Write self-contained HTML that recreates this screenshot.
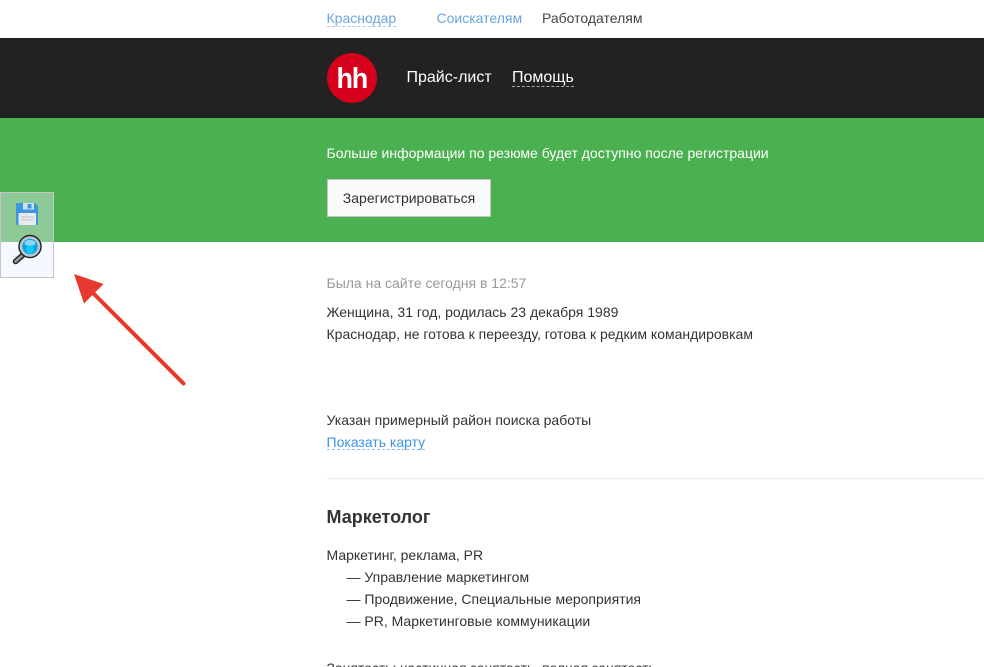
<!DOCTYPE html>
<html lang="ru">
<head>
<meta charset="utf-8">
<title>Резюме</title>
<style>
html,body{margin:0;padding:0;background:#fff;width:984px;height:667px;overflow:hidden}
#p{position:relative;width:984px;height:667px;overflow:hidden;font-family:"Liberation Sans",Arial,sans-serif;font-size:14px;color:#333}
.t{position:absolute;white-space:nowrap;line-height:20px}
.band{position:absolute;left:0;width:984px}
svg{position:absolute;left:0;top:0}
</style>
</head>
<body>
<div id="p">
<div class="band" style="top:38px;height:80px;background:#222"></div>
<div class="band" style="top:118px;height:124px;background:#4bb050"></div>

<div class="t" style="left:326.5px;top:8px;color:#6aa5dc;height:18px;border-bottom:1px dashed #a8cbec">Краснодар</div>
<div class="t" style="left:436.5px;top:8px;color:#6aa5dc">Соискателям</div>
<div class="t" style="left:542px;top:8px;color:#444">Работодателям</div>

<div style="position:absolute;left:327px;top:53px;width:50px;height:50px;border-radius:50%;background:#d6001c"></div>
<div class="t" style="left:336.500px;top:61.700px;color:#fff;font-size:27px;line-height:34px;font-weight:bold;letter-spacing:-1.200px;transform:scaleY(1.060);transform-origin:50% 26.300px">hh</div>

<div class="t" style="left:406.5px;top:68px;color:#fff;font-size:16px">Прайс-лист</div>
<div class="t" style="left:512px;top:68px;color:#fff;font-size:16px;height:18px;border-bottom:1px dashed #aaa">Помощь</div>

<div class="t" style="left:326.5px;top:143px;color:#fff">Больше информации по резюме будет доступно после регистрации</div>
<div style="position:absolute;left:327px;top:179px;width:162px;height:36px;background:#fafafa;border:1px solid #c4c4c4;text-align:center;line-height:37px;color:#333">Зарегистрироваться</div>

<div class="t" style="left:326.5px;top:273px;color:#999">Была на сайте сегодня в 12:57</div>
<div class="t" style="left:326.5px;top:302px">Женщина, 31 год, родилась 23 декабря 1989</div>
<div class="t" style="left:326.5px;top:324px">Краснодар, не готова к переезду, готова к редким командировкам</div>
<div class="t" style="left:326.5px;top:410px">Указан примерный район поиска работы</div>
<div class="t" style="left:326.5px;top:432px;color:#3d94e6;height:17px;border-bottom:1px dashed #8fc0ee">Показать карту</div>

<div style="position:absolute;left:327px;top:478px;width:657px;height:1px;background:#eaeaea"></div>

<div class="t" style="left:326.5px;top:505px;font-size:18px;line-height:24px;font-weight:bold;color:#333">Маркетолог</div>
<div class="t" style="left:326.5px;top:545px">Маркетинг, реклама, PR</div>
<div class="t" style="left:346.5px;top:567px">— Управление маркетингом</div>
<div class="t" style="left:346.5px;top:589px">— Продвижение, Специальные мероприятия</div>
<div class="t" style="left:346.5px;top:611px">— PR, Маркетинговые коммуникации</div>
<div class="t" style="left:326.5px;top:658px;letter-spacing:-0.040px">Занятость: частичная занятость, полная занятость</div>

<div style="position:absolute;left:0;top:192px;width:52px;height:84px;border:1px solid #c2c4c8;background:#f5f8ff"></div>
<div style="position:absolute;left:1px;top:193px;width:52px;height:49px;background:#8cc995"></div>

<svg width="984" height="667" viewBox="0 0 984 667">
  <!-- floppy -->
  <path d="M16 204.500a1.500 1.500 0 0 1 1.500-1.500H35l3 3v17.500a1.500 1.500 0 0 1-1.500 1.500h-19a1.500 1.500 0 0 1-1.500-1.500z" fill="#3d96de"/>
  <rect x="23" y="203" width="11" height="6.500" fill="#cfe3f3"/>
  <rect x="27.500" y="204" width="4" height="4.500" fill="#3d96de"/>
  <rect x="18.500" y="213" width="17.500" height="12" rx="1" fill="#e8ebee"/>
  <path d="M21 217h12.500M21 220h12.500" stroke="#bcc2c6" stroke-width="1"/>
  <!-- magnifier -->
  <path d="M15.500 261.500l8-7" stroke="#222" stroke-width="5.500" stroke-linecap="round"/>
  <path d="M15.500 261.500l8-7" stroke="#9a9ea2" stroke-width="2.500" stroke-linecap="round"/>
  <circle cx="30" cy="246.500" r="11" fill="#0aa6e8" stroke="#222" stroke-width="1.500"/>
  <circle cx="30" cy="246.500" r="9" fill="none" stroke="#c0c6ca" stroke-width="2.500"/>
  <ellipse cx="30" cy="243" rx="5.500" ry="3" fill="#8fd6f4"/>
  <circle cx="30" cy="249.500" r="4" fill="#12c8f4"/>
  <!-- arrow -->
  <path d="M183.500 383.500L86 286" stroke="#e8392e" stroke-width="4" stroke-linecap="round"/>
  <path d="M74 274L103.500 284 84 303.500z" fill="#e8392e"/>
</svg>
</div>
</body>
</html>
